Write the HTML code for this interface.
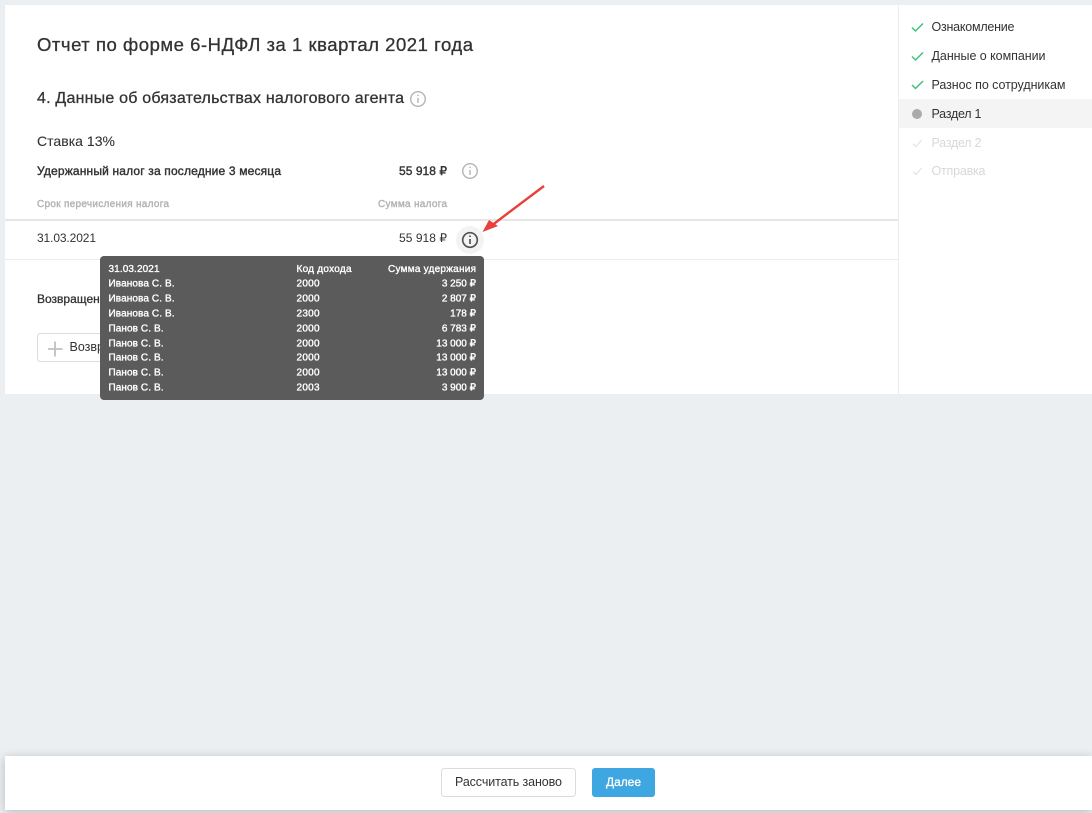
<!DOCTYPE html>
<html lang="ru">
<head>
<meta charset="utf-8">
<title>Отчет по форме 6-НДФЛ</title>
<style>
html,body{margin:0;padding:0;width:1092px;height:813px;overflow:hidden;background:#ebeff2}
#foot{position:absolute;left:5px;top:756px;width:1087px;height:54px;background:#fff;box-shadow:0 2px 10px rgba(0,0,0,.22)}
svg{position:absolute;left:0;top:0}
text{font-family:"Liberation Sans",sans-serif;fill:#333}
.m{stroke:#333;stroke-width:.3}
.h{stroke:#333;stroke-width:.4}
.t text{fill:#fff;font-size:10px;stroke:#fff;stroke-width:.35}
.s{font-size:12.500px}
.n{font-size:12px}
.l{font-size:10px;fill:#b3b3b3;stroke:#b3b3b3;stroke-width:.4}
.d{fill:#d8d8d8}
</style>
</head>
<body>
<div id="foot"></div>
<svg width="1092" height="813" viewBox="0 0 1092 813" xmlns="http://www.w3.org/2000/svg">
  <rect x="5" y="5" width="1087" height="389" fill="#fff"/>
  <rect x="898" y="5" width="1" height="389" fill="#ececec"/>
  <rect x="899" y="99" width="193" height="29" fill="#f4f4f4"/>

  <text x="37" y="51" font-size="18.500" class="m" textLength="436">Отчет по форме 6-НДФЛ за 1 квартал 2021 года</text>
  <text x="37" y="103" font-size="16" class="m" textLength="367">4. Данные об обязательствах налогового агента</text>
  <g fill="none" stroke="#b4b4b4" stroke-width="1.400">
    <circle cx="418" cy="99" r="7.300"/><path d="M418 98v5M418 94.600v1.400"/>
    <circle cx="470" cy="171" r="7.300"/><path d="M470 170v5M470 166.600v1.400"/>
  </g>
  <text x="37" y="146" font-size="14" style="stroke:#333;stroke-width:.1" textLength="78">Ставка 13%</text>
  <text x="37" y="175" font-size="12" class="h" textLength="244">Удержанный налог за последние 3 месяца</text>
  <text x="399" y="175" font-size="12" class="h" textLength="48">55 918 ₽</text>
  <text x="37" y="207" class="l" textLength="132">Срок перечисления налога</text>
  <text x="378" y="207" class="l" textLength="69">Сумма налога</text>
  <rect x="5" y="219" width="893" height="2" fill="#e6e6e6"/>
  <rect x="5" y="259" width="893" height="1" fill="#ececec"/>
  <text x="37" y="242" class="n" textLength="59">31.03.2021</text>
  <text x="399" y="242" class="n" textLength="48">55 918 ₽</text>

  <text x="37" y="303" font-size="12" class="m">Возвращенный налог</text>
  <rect x="37.500" y="333.500" width="130" height="28" rx="3" fill="#fff" stroke="#dcdcdc"/>
  <path d="M48 349h14.500M55 341.500v15" stroke="#c0c0c0" stroke-width="1.800" fill="none"/>
  <text x="69.500" y="351" font-size="12.500">Возврат налога</text>

  <circle cx="470" cy="240" r="14" fill="#f3f3f3"/>
  <g fill="none" stroke="#555" stroke-width="1.700">
    <circle cx="470" cy="240" r="7.300"/><path d="M470 239v5M470 235.500v1.500"/>
  </g>
  <path d="M544 186L491 226" stroke="#e8403a" stroke-width="2.400" fill="none"/>
  <path d="M482.500 232L489 220L498 226Z" fill="#e8403a"/>

  <rect x="100" y="256" width="384" height="144" rx="4" fill="#5b5b5b"/>
  <g class="t">
    <text x="108.500" y="272" textLength="51">31.03.2021</text>
    <text x="296.500" y="272" textLength="55">Код дохода</text>
    <text x="388" y="272" textLength="88">Сумма удержания</text>

    <text x="108.500" y="286.500" textLength="66">Иванова С. В.</text>
    <text x="296.500" y="286.500" textLength="23">2000</text>
    <text x="476" y="286.500" text-anchor="end">3 250 ₽</text>

    <text x="108.500" y="301.500" textLength="66">Иванова С. В.</text>
    <text x="296.500" y="301.500" textLength="23">2000</text>
    <text x="476" y="301.500" text-anchor="end">2 807 ₽</text>

    <text x="108.500" y="316.500" textLength="66">Иванова С. В.</text>
    <text x="296.500" y="316.500" textLength="23">2300</text>
    <text x="476" y="316.500" text-anchor="end">178 ₽</text>

    <text x="108.500" y="331.500" textLength="55">Панов С. В.</text>
    <text x="296.500" y="331.500" textLength="23">2000</text>
    <text x="476" y="331.500" text-anchor="end">6 783 ₽</text>

    <text x="108.500" y="346.500" textLength="55">Панов С. В.</text>
    <text x="296.500" y="346.500" textLength="23">2000</text>
    <text x="476" y="346.500" text-anchor="end">13 000 ₽</text>

    <text x="108.500" y="360.500" textLength="55">Панов С. В.</text>
    <text x="296.500" y="360.500" textLength="23">2000</text>
    <text x="476" y="360.500" text-anchor="end">13 000 ₽</text>

    <text x="108.500" y="375.500" textLength="55">Панов С. В.</text>
    <text x="296.500" y="375.500" textLength="23">2000</text>
    <text x="476" y="375.500" text-anchor="end">13 000 ₽</text>

    <text x="108.500" y="390.500" textLength="55">Панов С. В.</text>
    <text x="296.500" y="390.500" textLength="23">2003</text>
    <text x="476" y="390.500" text-anchor="end">3 900 ₽</text>
  </g>

  <g fill="none" stroke="#3cc47c" stroke-width="1.500">
    <path d="M912 27.500l3.500 3.500L923 23.500"/>
    <path d="M912 56.500l3.500 3.500L923 52.500"/>
    <path d="M912 85l3.500 3.500L923 81"/>
  </g>
  <circle cx="917" cy="114" r="5" fill="#aaa"/>
  <g fill="none" stroke="#e4e4e4" stroke-width="1.300">
    <path d="M913 144l3 2.500L921.500 140"/>
    <path d="M913 172l3 2.500L921.500 168"/>
  </g>
  <text x="931.500" y="31" class="s" textLength="83">Ознакомление</text>
  <text x="931.500" y="60" class="s" textLength="114">Данные о компании</text>
  <text x="931.500" y="89" class="s" textLength="134">Разнос по сотрудникам</text>
  <text x="931.500" y="118" class="s" textLength="50">Раздел 1</text>
  <text x="931.500" y="147" class="s d" textLength="50">Раздел 2</text>
  <text x="931.500" y="175" class="s d" textLength="54">Отправка</text>

  <rect x="441.500" y="768.500" width="134" height="28" rx="3" fill="#fff" stroke="#dcdcdc"/>
  <text x="455" y="786" class="s" textLength="107">Рассчитать заново</text>
  <rect x="592" y="768" width="63" height="29" rx="3" fill="#3ea6e0"/>
  <text x="606" y="786" class="n" style="fill:#fff;stroke:#fff;stroke-width:.3" textLength="35">Далее</text>
</svg>
</body>
</html>
